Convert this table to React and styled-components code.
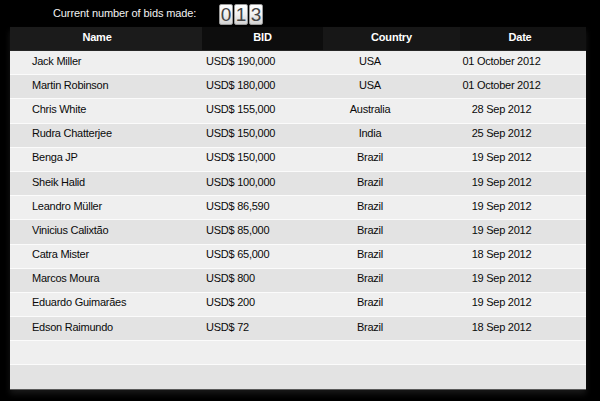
import styled, { createGlobalStyle } from "styled-components";

const GlobalStyle = createGlobalStyle`
  html, body {
    margin: 0;
    background: #000000;
    font-family: "Liberation Sans", Arial, sans-serif;
  }
`;

const Page = styled.div`
  width: 600px;
  height: 401px;
  background: #000000;
  overflow: hidden;
`;

const TopBar = styled.div`
  height: 27px;
  display: flex;
  align-items: flex-start;
  padding-left: 53px;
  box-sizing: border-box;
`;

const CounterLabel = styled.span`
  color: #f2f2f2;
  font-size: 11px;
  letter-spacing: -0.1px;
  margin-top: 7px;
  width: 166px;
  white-space: nowrap;
`;

const Counter = styled.div`
  display: flex;
  gap: 1px;
  margin-top: 4px;
`;

const Digit = styled.span`
  width: 14px;
  height: 21px;
  box-sizing: border-box;
  border-radius: 2px;
  background: linear-gradient(#ffffff 0%, #f0f0f0 50%, #d2d2d2 100%);
  border: 1px solid #9a9a9a;
  color: #444444;
  font-size: 19px;
  line-height: 19px;
  text-align: center;
`;

const Table = styled.div`
  margin-left: 10px;
  width: 576px;
  box-shadow: 0 4px 6px rgba(40, 40, 40, 0.6);
`;

const HeadRow = styled.div`
  display: grid;
  grid-template-columns: 192px 121px 137px 126px;
  height: 24px;
  border-bottom: 1px solid #262626;
  box-sizing: border-box;
`;

const HeadCell = styled.div`
  background: ${(p) => p.$bg};
  color: #ffffff;
  font-weight: bold;
  font-size: 11px;
  letter-spacing: -0.2px;
  display: flex;
  align-items: center;
  justify-content: center;
  padding-right: ${(p) => p.$shift || 0}px;
  padding-bottom: 3px;
`;

const Row = styled.div`
  display: grid;
  grid-template-columns: 192px 121px 94px 169px;
  height: 24.2px;
  box-sizing: border-box;
  background: ${(p) => (p.$odd ? "#e3e3e3" : "#efefef")};
  border-bottom: 1px solid ${(p) => (p.$last ? "#5a5a5a" : "#fbfbfb")};
  color: #0a0a0a;
  font-size: 11px;
  letter-spacing: -0.25px;
`;

const Cell = styled.div`
  display: flex;
  align-items: center;
  justify-content: ${(p) => (p.$center ? "center" : "flex-start")};
  padding-left: ${(p) => p.$pad || 0}px;
  padding-bottom: 4px;
  white-space: nowrap;
`;

const bids = [
  ["Jack Miller", "USD$ 190,000", "USA", "01 October 2012"],
  ["Martin Robinson", "USD$ 180,000", "USA", "01 October 2012"],
  ["Chris White", "USD$ 155,000", "Australia", "28 Sep 2012"],
  ["Rudra Chatterjee", "USD$ 150,000", "India", "25 Sep 2012"],
  ["Benga JP", "USD$ 150,000", "Brazil", "19 Sep 2012"],
  ["Sheik Halid", "USD$ 100,000", "Brazil", "19 Sep 2012"],
  ["Leandro Müller", "USD$ 86,590", "Brazil", "19 Sep 2012"],
  ["Vinicius Calixtão", "USD$ 85,000", "Brazil", "19 Sep 2012"],
  ["Catra Mister", "USD$ 65,000", "Brazil", "18 Sep 2012"],
  ["Marcos Moura", "USD$ 800", "Brazil", "19 Sep 2012"],
  ["Eduardo Guimarães", "USD$ 200", "Brazil", "19 Sep 2012"],
  ["Edson Raimundo", "USD$ 72", "Brazil", "18 Sep 2012"],
  ["", "", "", ""],
  ["", "", "", ""],
];

const App = () => {
  return (
    <Page>
      <GlobalStyle />
      <TopBar>
        <CounterLabel>Current number of bids made:</CounterLabel>
        <Counter>
          {"013".split("").map((d, i) => (
            <Digit key={i}>{d}</Digit>
          ))}
        </Counter>
      </TopBar>
      <Table>
        <HeadRow>
          <HeadCell $bg="#1b1b1b" $shift={18}>Name</HeadCell>
          <HeadCell $bg="#0d0d0d">BID</HeadCell>
          <HeadCell $bg="#171717">Country</HeadCell>
          <HeadCell $bg="#121212" $shift={6}>Date</HeadCell>
        </HeadRow>
        {bids.map(([name, bid, country, date], i) => (
          <Row key={i} $odd={i % 2 === 1} $last={i === bids.length - 1}>
            <Cell $pad={22}>{name}</Cell>
            <Cell $pad={4}>{bid}</Cell>
            <Cell $center>{country}</Cell>
            <Cell $center>{date}</Cell>
          </Row>
        ))}
      </Table>
    </Page>
  );
};

export default App;
